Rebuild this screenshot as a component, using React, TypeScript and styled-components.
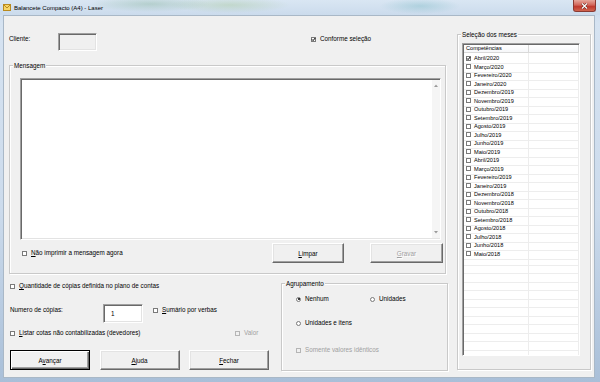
import React from 'react';
import styled, { createGlobalStyle } from 'styled-components';

const GlobalStyle = createGlobalStyle`
  html, body {
    margin: 0;
    padding: 0;
  }
  body {
    width: 600px;
    height: 382px;
    overflow: hidden;
    font-family: "Liberation Sans", Arial, sans-serif;
    color: #000;
  }
  * {
    box-sizing: border-box;
  }
`;

const Window = styled.div`
  width: 600px;
  height: 382px;
  display: flex;
  flex-direction: column;
  background: linear-gradient(180deg, #c4d6ea 0%, #d6e3f1 6%, #ccdbec 55%, #a9bfd8 100%);
`;

const TitleBar = styled.div`
  height: 15px;
  display: flex;
  align-items: center;
  padding-left: 3px;
  background:
    radial-gradient(ellipse 60px 8px at 150px 4px, rgba(120, 170, 140, 0.35), transparent),
    radial-gradient(ellipse 60px 8px at 230px 5px, rgba(150, 190, 120, 0.3), transparent),
    radial-gradient(ellipse 40px 8px at 420px 6px, rgba(90, 170, 180, 0.3), transparent),
    linear-gradient(180deg, #d9e6f3 0%, #cbdbec 100%);
`;

const TitleText = styled.span`
  font-size: 6px;
  margin-left: 3px;
  line-height: 8px;
`;

const CloseButton = styled.div`
  margin-left: auto;
  margin-right: 4px;
  align-self: flex-start;
  width: 23px;
  height: 12px;
  border: 1px solid #8a3a32;
  border-top: none;
  border-radius: 0 0 3px 3px;
  background: linear-gradient(180deg, #e6a79c 0%, #d2675b 45%, #c0392e 60%, #d0654f 100%);
  display: flex;
  align-items: center;
  justify-content: center;
`;

const Body = styled.div`
  flex: 1;
  margin: 0 5px 4px 3px;
  background: #f0f0f0;
  border: 1px solid #a9b8c7;
  display: flex;
  gap: 9px;
  padding: 17px 3px 0 5px;
  font-size: 6.3px;
`;

const LeftCol = styled.div`
  width: 439px;
  display: flex;
  flex-direction: column;
`;

const RightCol = styled.div`
  width: 134px;
  margin-top: 1px;
`;

const TopRow = styled.div`
  display: flex;
  align-items: flex-start;
  height: 18px;
`;

const FieldLabel = styled.span<{ $w: number }>`
  width: ${p => p.$w}px;
  line-height: 10px;
  margin-top: 1px;
  flex: none;
`;

const Sunken = styled.div<{ $w: number; $h: number; $bg?: string }>`
  width: ${p => p.$w}px;
  height: ${p => p.$h}px;
  flex: none;
  background: ${p => p.$bg || '#fff'};
  border: 1px solid;
  border-color: #a0a0a0 #fff #fff #a0a0a0;
  box-shadow: inset 1px 1px #696969, inset -1px -1px #e3e3e3;
`;

const NumberField = styled(Sunken)`
  display: flex;
  align-items: center;
  padding-left: 7px;
  line-height: 10px;
`;

const MessageArea = styled(Sunken)`
  display: flex;
  justify-content: flex-end;
  padding: 1px 0 1px 1px;
`;

const ScrollTrack = styled.div`
  width: 8px;
  height: 100%;
  background: #f5f5f5;
  display: flex;
  flex-direction: column;
  justify-content: space-between;
  align-items: center;
  padding: 4px 0;
`;

const Group = styled.div<{ $w: number; $h: number }>`
  position: relative;
  width: ${p => p.$w}px;
  height: ${p => p.$h}px;
  flex: none;
  border: 1px solid #c9c9c9;
  box-shadow: inset 1px 1px #fff, 1px 1px #fff;
`;

const Legend = styled.span`
  position: absolute;
  top: -4px;
  left: 3px;
  padding: 0 1px;
  background: #f0f0f0;
  line-height: 7px;
`;

const MessageGroup = styled(Group)`
  margin-top: 14px;
  padding: 12px 4px 0 10px;
`;

const MessageFooter = styled.div`
  display: flex;
  align-items: center;
  margin-top: 3px;
  margin-right: -2px;
  height: 20px;
  padding-left: 2px;
`;

const Button = styled.div<{ $w: number; $default?: boolean; $disabled?: boolean }>`
  width: ${p => p.$w}px;
  height: 20px;
  flex: none;
  display: flex;
  align-items: center;
  justify-content: center;
  background: #f0f0f0;
  color: ${p => (p.$disabled ? '#a0a0a0' : '#000')};
  text-shadow: ${p => (p.$disabled ? '1px 1px #fff' : 'none')};
  border: 1px solid;
  border-color: ${p => (p.$default ? '#000' : '#fff #696969 #696969 #fff')};
  box-shadow: ${p =>
    p.$default
      ? 'inset 1px 1px #fff, inset -1px -1px #696969, inset -2px -2px #a0a0a0'
      : 'inset -1px -1px #a0a0a0, inset 1px 1px #e3e3e3'};
`;

const ClearButton = styled(Button)`
  margin-left: auto;
  margin-right: 26px;
`;

const BottomSection = styled.div`
  display: flex;
  align-items: flex-start;
`;

const OptionsCol = styled.div`
  width: 272px;
  display: flex;
  flex-direction: column;
  padding-left: 1px;
`;

const OptionRow = styled.div<{ $mt: number }>`
  display: flex;
  align-items: flex-start;
  margin-top: ${p => p.$mt}px;
`;

const ButtonRow = styled.div`
  display: flex;
  gap: 9.5px;
  margin-top: 12px;
`;

const GroupingBox = styled(Group)`
  margin-top: 9px;
  padding: 10px 0 0 14px;
`;

const MonthsBox = styled(Group)`
  padding: 8px 0 0 4px;
`;

const List = styled.div`
  width: 118px;
  height: 313px;
  background: #fff;
  border: 1px solid;
  border-color: #a0a0a0 #fff #fff #a0a0a0;
  box-shadow: inset 1px 1px #696969;
  padding: 1px 0 0 1px;
  overflow: hidden;
  font-size: 5.6px;
`;

const ListHeader = styled.div`
  display: grid;
  grid-template-columns: 65px 1fr;
  height: 8px;
  line-height: 7px;
`;

const HeaderCell = styled.div`
  border-right: 1px solid #d9d9d9;
  border-bottom: 1px solid #d9d9d9;
  padding-left: 2px;
  background: linear-gradient(180deg, #fff, #f6f7f9);
`;

const ListRow = styled.div`
  display: grid;
  grid-template-columns: 65px 1fr;
  height: 8.5px;
`;

const ListCell = styled.div`
  border-right: 1px solid #ededed;
  border-bottom: 1px solid #ededed;
  padding-left: 2px;
  display: flex;
  align-items: center;
  gap: 3px;
  white-space: nowrap;
`;

const Item = styled.span<{ $w?: number; $disabled?: boolean; $gap?: number }>`
  display: inline-flex;
  align-items: center;
  gap: ${p => p.$gap ?? 4}px;
  height: 10px;
  line-height: 10px;
  flex: none;
  width: ${p => (p.$w ? `${p.$w}px` : 'auto')};
  color: ${p => (p.$disabled ? '#a0a0a0' : '#000')};
  white-space: nowrap;
`;

const Box = styled.span<{ $disabled?: boolean; $size?: number }>`
  width: ${p => p.$size ?? 5}px;
  height: ${p => p.$size ?? 5}px;
  flex: none;
  border: 1px solid ${p => (p.$disabled ? '#b5b5b5' : '#7a7a7a')};
  background: ${p => (p.$disabled ? '#f0f0f0' : '#fff')};
  position: relative;
`;

const Round = styled(Box)`
  border-radius: 50%;
  display: flex;
  align-items: center;
  justify-content: center;
`;

const Dot = styled.span`
  width: 2px;
  height: 2px;
  border-radius: 50%;
  background: #000;
`;

const Mark = styled.svg`
  position: absolute;
  left: -1px;
  top: -1px;
  overflow: visible;
`;

type CheckProps = {
  label: React.ReactNode;
  checked?: boolean;
  disabled?: boolean;
  w?: number;
  size?: number;
  gap?: number;
};

function Check({ label, checked, disabled, w, size, gap }: CheckProps) {
  const s = size ?? 5;
  return (
    <Item $w={w} $disabled={disabled} $gap={gap}>
      <Box $disabled={disabled} $size={s}>
        {checked && (
          <Mark width={s} height={s} viewBox="0 0 5 5">
            <path d="M1 2.4 L2.1 3.6 L4.2 1" fill="none" stroke="#000" strokeWidth="1" />
          </Mark>
        )}
      </Box>
      <span>{label}</span>
    </Item>
  );
}

function Radio({ label, checked, w }: { label: string; checked?: boolean; w?: number }) {
  return (
    <Item $w={w}>
      <Round>{checked && <Dot />}</Round>
      <span>{label}</span>
    </Item>
  );
}

const months = [
  'Abril/2020', 'Março/2020', 'Fevereiro/2020', 'Janeiro/2020',
  'Dezembro/2019', 'Novembro/2019', 'Outubro/2019', 'Setembro/2019',
  'Agosto/2019', 'Julho/2019', 'Junho/2019', 'Maio/2019',
  'Abril/2019', 'Março/2019', 'Fevereiro/2019', 'Janeiro/2019',
  'Dezembro/2018', 'Novembro/2018', 'Outubro/2018', 'Setembro/2018',
  'Agosto/2018', 'Julho/2018', 'Junho/2018', 'Maio/2018',
];

export default function App() {
  return (
    <>
      <GlobalStyle />
      <Window>
        <TitleBar>
          <svg width="8" height="7" viewBox="0 0 8 7">
            <rect x="0.5" y="0.5" width="7" height="6" fill="#f6d66a" stroke="#b98a1e" />
            <path d="M0.5 0.5 L4 4 L7.5 0.5" fill="none" stroke="#b98a1e" />
          </svg>
          <TitleText>Balancete Compacto (A4) - Laser</TitleText>
          <CloseButton>
            <svg width="7" height="6" viewBox="0 0 7 6">
              <path d="M1 0.5 L6 5.5 M6 0.5 L1 5.5" stroke="#5a1a14" strokeWidth="2.2" />
              <path d="M1 0.5 L6 5.5 M6 0.5 L1 5.5" stroke="#fff" strokeWidth="1.3" />
            </svg>
          </CloseButton>
        </TitleBar>
        <Body>
          <LeftCol>
            <TopRow>
              <FieldLabel $w={49}>Cliente:</FieldLabel>
              <Sunken $w={39} $h={18} $bg="#f0f0f0" />
              <span style={{ marginLeft: 214, marginTop: 1 }}>
                <Check checked label="Conforme seleção" />
              </span>
            </TopRow>

            <MessageGroup $w={437} $h={209}>
              <Legend>Mensagem</Legend>
              <MessageArea $w={421} $h={162}>
                <ScrollTrack>
                  <svg width="4" height="3" viewBox="0 0 4 3">
                    <path d="M0 3 L2 0.5 L4 3 Z" fill="#9a9a9a" />
                  </svg>
                  <svg width="4" height="3" viewBox="0 0 4 3">
                    <path d="M0 0 L2 2.5 L4 0 Z" fill="#9a9a9a" />
                  </svg>
                </ScrollTrack>
              </MessageArea>
              <MessageFooter>
                <Check label={<><u>N</u>ão imprimir a mensagem agora</>} />
                <ClearButton $w={72}><span><u>L</u>impar</span></ClearButton>
                <Button $w={73} $disabled><span><u>G</u>ravar</span></Button>
              </MessageFooter>
            </MessageGroup>

            <BottomSection>
              <OptionsCol>
                <OptionRow $mt={7}>
                  <Check label={<><u>Q</u>uantidade de cópias definida no plano de contas</>} />
                </OptionRow>
                <OptionRow $mt={13}>
                  <FieldLabel $w={93}>Numero de cópias:</FieldLabel>
                  <NumberField $w={40} $h={19}>1</NumberField>
                  <span style={{ marginLeft: 10, marginTop: 1 }}>
                    <Check label={<><u>S</u>umário por verbas</>} />
                  </span>
                </OptionRow>
                <OptionRow $mt={5}>
                  <Check w={225} label={<><u>L</u>istar cotas não contabilizadas (devedores)</>} />
                  <Check disabled label="Valor" />
                </OptionRow>
                <ButtonRow>
                  <Button $w={80} $default><span>A<u>v</u>ançar</span></Button>
                  <Button $w={80}><span><u>A</u>juda</span></Button>
                  <Button $w={80}><span><u>F</u>echar</span></Button>
                </ButtonRow>
              </OptionsCol>

              <GroupingBox $w={167} $h={88}>
                <Legend>Agrupamento</Legend>
                <OptionRow $mt={0}>
                  <Radio w={74} checked label="Nenhum" />
                  <Radio label="Unidades" />
                </OptionRow>
                <OptionRow $mt={14}>
                  <Radio label="Unidades e itens" />
                </OptionRow>
                <OptionRow $mt={17}>
                  <Check disabled label="Somente valores idênticos" />
                </OptionRow>
              </GroupingBox>
            </BottomSection>
          </LeftCol>

          <RightCol>
            <MonthsBox $w={134} $h={336}>
              <Legend>Seleção dos meses</Legend>
              <List>
                <ListHeader>
                  <HeaderCell>Competências</HeaderCell>
                  <HeaderCell />
                </ListHeader>
                {months.map((m, i) => (
                  <ListRow key={m}>
                    <ListCell>
                      <Check checked={i === 0} label={m} gap={3} />
                    </ListCell>
                    <ListCell />
                  </ListRow>
                ))}
                {Array.from({ length: 13 }).map((_, i) => (
                  <ListRow key={'e' + i}>
                    <ListCell />
                    <ListCell />
                  </ListRow>
                ))}
              </List>
            </MonthsBox>
          </RightCol>
        </Body>
      </Window>
    </>
  );
}
